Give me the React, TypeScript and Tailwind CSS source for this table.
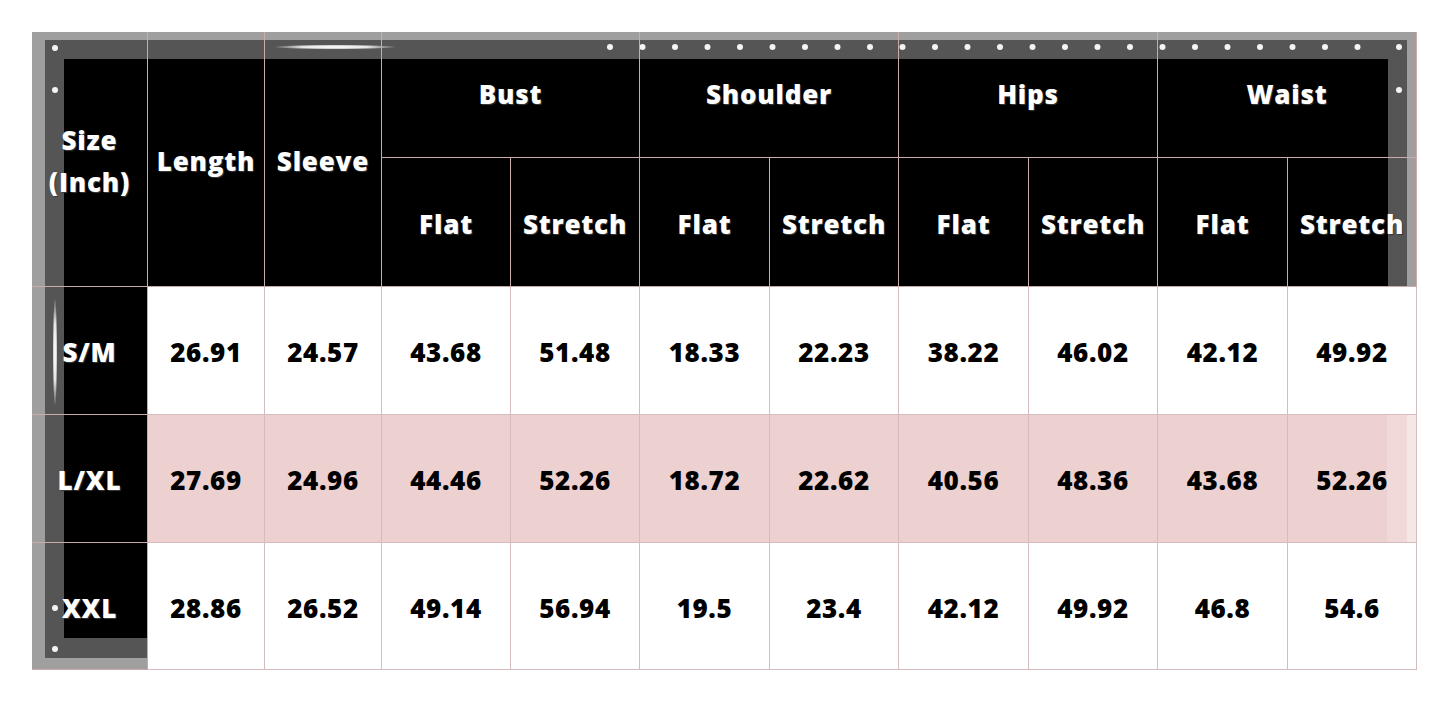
const groups = ["Bust", "Shoulder", "Hips", "Waist"];

const rows = [
  { size: "S/M", values: ["26.91", "24.57", "43.68", "51.48", "18.33", "22.23", "38.22", "46.02", "42.12", "49.92"] },
  { size: "L/XL", values: ["27.69", "24.96", "44.46", "52.26", "18.72", "22.62", "40.56", "48.36", "43.68", "52.26"] },
  { size: "XXL", values: ["28.86", "26.52", "49.14", "56.94", "19.5", "23.4", "42.12", "49.92", "46.8", "54.6"] },
];

const topDots = Array.from({ length: 24 }, (_, k) => 578 + k * 32.5);

function Frame() {
  return (
    <svg className="absolute inset-0" width="1385" height="638" viewBox="0 0 1385 638">
      <defs>
        <radialGradient id="glare" cx="50%" cy="50%" r="50%">
          <stop offset="0%" stopColor="#ffffff" />
          <stop offset="55%" stopColor="#ffffff" stopOpacity="0.85" />
          <stop offset="100%" stopColor="#ffffff" stopOpacity="0" />
        </radialGradient>
      </defs>
      {/* outer light band */}
      <rect x="0" y="0" width="1385" height="255" fill="#9f9f9f" />
      <rect x="0" y="0" width="116" height="638" fill="#9f9f9f" />
      {/* inner dark band */}
      <rect x="13" y="8" width="1362" height="247" fill="#555555" />
      <rect x="13" y="8" width="103" height="618" fill="#555555" />
      {/* black panel */}
      <rect x="32" y="27" width="1324" height="228" fill="#000000" />
      <rect x="32" y="27" width="84" height="579" fill="#000000" />
      {/* dots */}
      <circle cx="23" cy="16" r="3" fill="#f4f4f4" />
      <circle cx="23" cy="58" r="3" fill="#f4f4f4" />
      <circle cx="23" cy="576" r="3" fill="#f4f4f4" />
      <circle cx="23" cy="617" r="3" fill="#f4f4f4" />
      {topDots.map((x) => (
        <circle key={x} cx={x} cy="15" r="3" fill="#f4f4f4" />
      ))}
      <circle cx="1367" cy="15" r="3" fill="#f4f4f4" />
      <circle cx="1367" cy="58" r="3" fill="#f4f4f4" />
      {/* glares */}
      <ellipse cx="303" cy="15" rx="62" ry="2.5" fill="url(#glare)" />
      <ellipse cx="23" cy="320" rx="2.5" ry="55" fill="url(#glare)" />
    </svg>
  );
}

const head = "flex items-center justify-center border-r border-b border-[#c9abab] text-white text-[26px] tracking-[0.8px] font-extrabold [text-shadow:1px_1px_1px_#3a3a3a]";
const cell = "flex items-center justify-center pt-1 border-r border-b border-[#d6bcbc] text-black text-[26px] tracking-[0.6px] font-extrabold";

export default function App() {
  return (
    <div className="w-[1450px] h-[702px] bg-white pt-8 pl-8" style={{ fontFamily: "'Open Sans', 'Liberation Sans', sans-serif" }}>
      <div className="relative w-[1385px] h-[638px]">
        <Frame />
        <div className="relative grid grid-cols-[116px_117px_117px_129px_129px_130px_129px_130px_129px_130px_129px] grid-rows-[126px_129px_128px_128px_127px]">
          <div className={`${head} row-span-2 flex-col leading-[42px] pt-1`}>
            <span>Size</span>
            <span>(Inch)</span>
          </div>
          <div className={`${head} row-span-2 pt-1`}>Length</div>
          <div className={`${head} row-span-2 pt-1`}>Sleeve</div>
          {groups.map((g) => (
            <div key={g} className={`${head} col-span-2`}>{g}</div>
          ))}
          {groups.map((g) => (
            <div key={g} className="contents">
              <div className={`${head} pt-1`}>Flat</div>
              <div className={`${head} pt-1`}>Stretch</div>
            </div>
          ))}
          {rows.map((r, ri) => (
            <div key={r.size} className="contents">
              <div className={`${head} pt-1`}>{r.size}</div>
              {r.values.map((v, vi) => {
                const pink = ri === 1;
                const last = vi === r.values.length - 1;
                let bg = "bg-white";
                if (pink) bg = last ? "bg-[linear-gradient(to_right,#edd1d0_0,#edd1d0_99px,#f1d9d9_99px,#f1d9d9_119px,#f6e7e7_119px)]" : "bg-[#edd1d0]";
                return (
                  <div key={vi} className={`${cell} ${bg}`}>{v}</div>
                );
              })}
            </div>
          ))}
        </div>
      </div>
    </div>
  );
}
